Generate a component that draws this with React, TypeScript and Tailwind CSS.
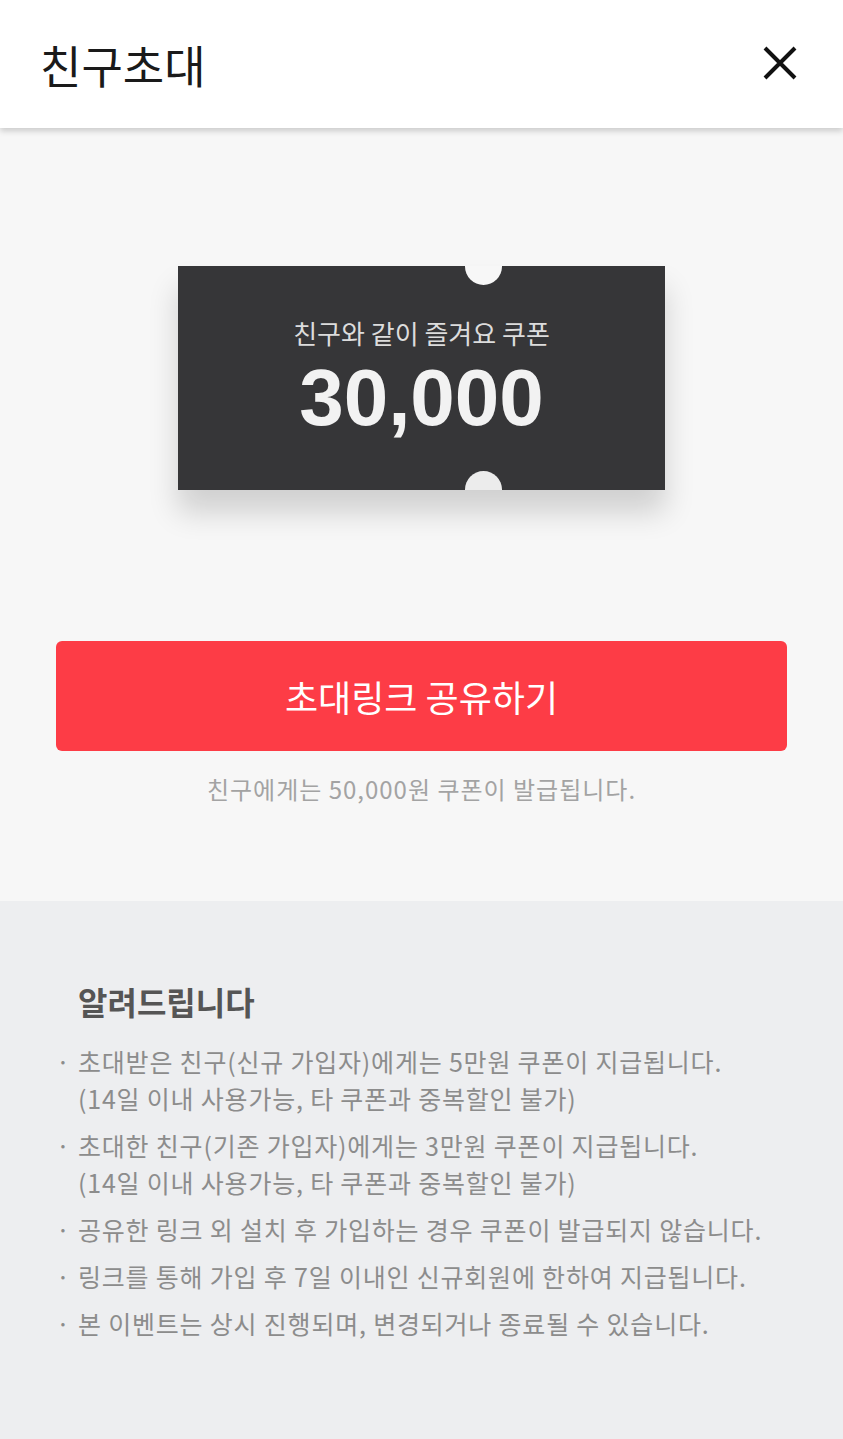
import React from 'react'

const notices: string[][] = [
  ['초대받은 친구(신규 가입자)에게는 5만원 쿠폰이 지급됩니다.', '(14일 이내 사용가능, 타 쿠폰과 중복할인 불가)'],
  ['초대한 친구(기존 가입자)에게는 3만원 쿠폰이 지급됩니다.', '(14일 이내 사용가능, 타 쿠폰과 중복할인 불가)'],
  ['공유한 링크 외 설치 후 가입하는 경우 쿠폰이 발급되지 않습니다.'],
  ['링크를 통해 가입 후 7일 이내인 신규회원에 한하여 지급됩니다.'],
  ['본 이벤트는 상시 진행되며, 변경되거나 종료될 수 있습니다.'],
]

export default function App(): React.ReactElement {
  return (
    <div className="min-h-[1439px] w-[843px] flex flex-col bg-[#edeef0] font-['Noto_Sans_CJK_KR',sans-serif]">
      {/* header */}
      <header className="relative z-10 h-[128px] flex items-center justify-between bg-white pl-[40px] pr-[46px] shadow-[0_3px_6px_rgba(0,0,0,0.18)]">
        <h1 className="text-[45px] leading-none text-[#1a1a1a]">친구초대</h1>
        <svg width="34" height="34" viewBox="0 0 34 34" className="mt-[-2px]">
          <path d="M2 2 L32 32 M32 2 L2 32" stroke="#111" strokeWidth="4" strokeLinecap="butt" />
        </svg>
      </header>

      {/* coupon area */}
      <section className="bg-[#f7f7f7] flex flex-col items-center pt-[138px] pb-[96px]">
        <div className="relative w-[487px] h-[224px] bg-[#363638] overflow-hidden flex flex-col items-center pt-[50px] shadow-[0_22px_28px_rgba(0,0,0,0.16)]">
          <span className="absolute left-[287px] top-[-18px] w-[37px] h-[37px] rounded-full bg-[#f7f7f7]"></span>
          <span className="absolute left-[287px] bottom-[-18px] w-[37px] h-[37px] rounded-full bg-[#ececec]"></span>
          <p className="text-[26px] leading-[34px] text-[#dcdcdc]">친구와 같이 즐겨요 쿠폰</p>
          <p className="mt-[6px] text-[80px] leading-[84px] font-bold text-[#f2f2f2] font-['Liberation_Sans',sans-serif]">30,000</p>
        </div>

        <button className="mt-[151px] w-[731px] h-[110px] rounded-[6px] bg-[#fd3c46] text-white text-[36px] flex items-center justify-center">
          초대링크 공유하기
        </button>
        <p className="mt-[22px] text-[24px] leading-[32px] text-[#a3a3a3] tracking-[1px]">친구에게는 50,000원 쿠폰이 발급됩니다.</p>
      </section>

      {/* notice */}
      <section className="flex-1 pt-[80px] pl-[56px] pr-[20px] pb-[80px]">
        <h2 className="pl-[22px] text-[32px] leading-[40px] font-bold text-[#555555]">알려드립니다</h2>
        <ul className="mt-[22px] flex flex-col gap-[10px]">
          {notices.map((lines, i) => (
            <li key={i} className="flex text-[25px] leading-[37px] text-[#8c8c8c] tracking-[0.8px]">
              <span className="w-[22px] shrink-0">·</span>
              <div>
                {lines.map((l, j) => (
                  <p key={j} className="whitespace-nowrap">{l}</p>
                ))}
              </div>
            </li>
          ))}
        </ul>
      </section>
    </div>
  )
}
